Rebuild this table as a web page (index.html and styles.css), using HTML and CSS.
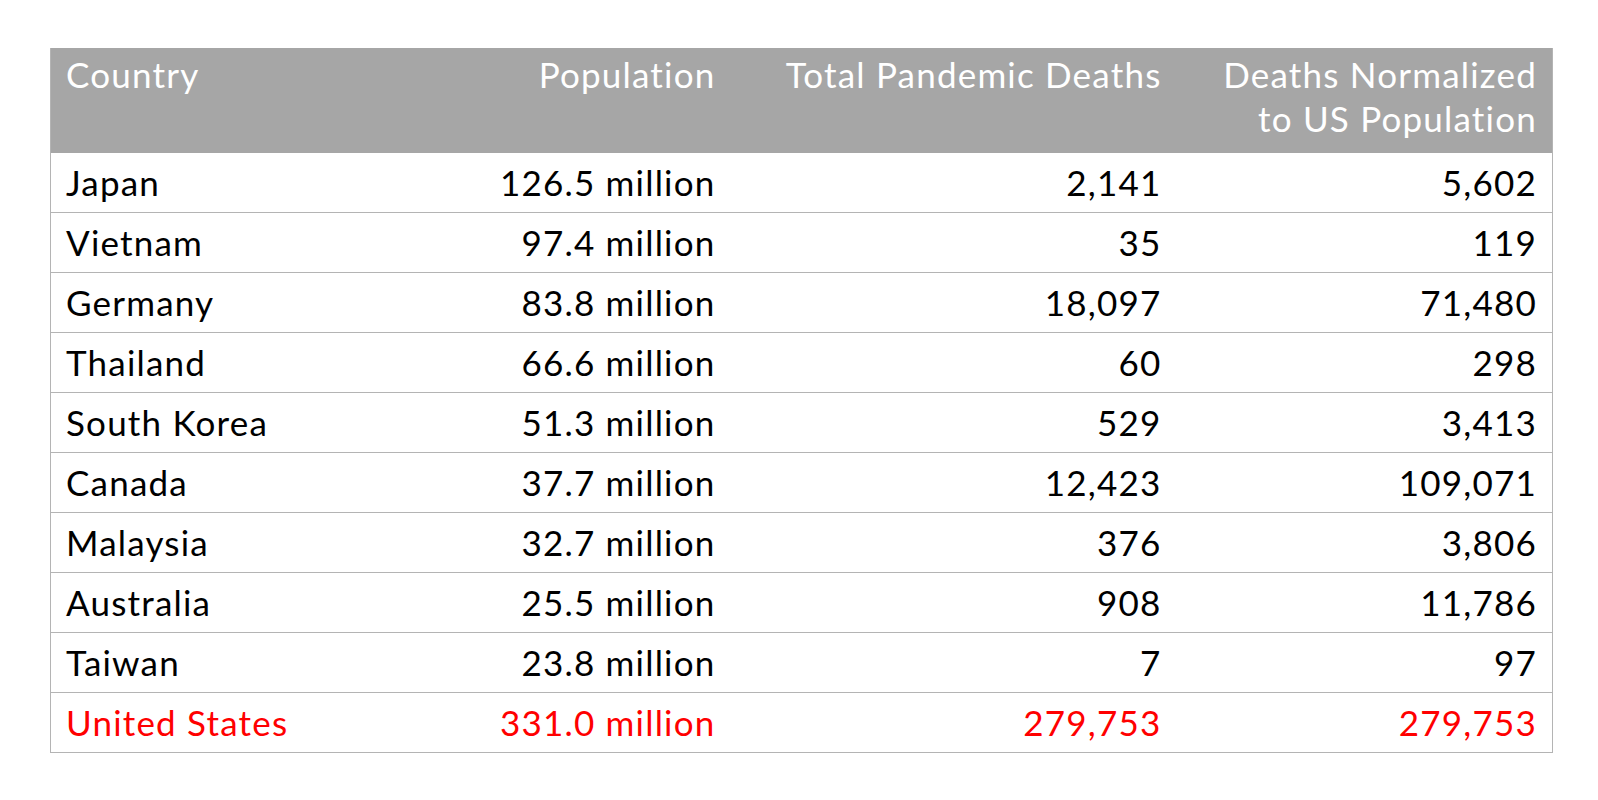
FILE: index.html
```html
<!DOCTYPE html>
<html>
<head>
<meta charset="utf-8">
<link rel="stylesheet" href="styles.css">
</head>
<body>
<table class="data">
  <colgroup>
    <col class="c1"><col class="c2"><col class="c3"><col class="c4">
  </colgroup>
  <thead>
    <tr>
      <th class="left">Country</th>
      <th>Population</th>
      <th>Total Pandemic Deaths</th>
      <th>Deaths Normalized<br>to US Population</th>
    </tr>
  </thead>
  <tbody>
    <tr><td class="left">Japan</td><td>126.5 million</td><td>2,141</td><td>5,602</td></tr>
    <tr><td class="left">Vietnam</td><td>97.4 million</td><td>35</td><td>119</td></tr>
    <tr><td class="left">Germany</td><td>83.8 million</td><td>18,097</td><td>71,480</td></tr>
    <tr><td class="left">Thailand</td><td>66.6 million</td><td>60</td><td>298</td></tr>
    <tr><td class="left">South Korea</td><td>51.3 million</td><td>529</td><td>3,413</td></tr>
    <tr><td class="left">Canada</td><td>37.7 million</td><td>12,423</td><td>109,071</td></tr>
    <tr><td class="left">Malaysia</td><td>32.7 million</td><td>376</td><td>3,806</td></tr>
    <tr><td class="left">Australia</td><td>25.5 million</td><td>908</td><td>11,786</td></tr>
    <tr><td class="left">Taiwan</td><td>23.8 million</td><td>7</td><td>97</td></tr>
    <tr class="us"><td class="left">United States</td><td>331.0 million</td><td>279,753</td><td>279,753</td></tr>
  </tbody>
</table>
</body>
</html>
```

FILE: styles.css
```css
html, body {
  margin: 0;
  padding: 0;
  background: #ffffff;
}

.data {
  margin: 48px 0 0 50px;
  border-collapse: collapse;
  table-layout: fixed;
  width: 1502px;
  font-family: Lato, "Noto Sans", sans-serif;
  font-size: 35px;
  letter-spacing: 1.2px;
  line-height: 44px;
  color: #000;
  border-left: 1px solid #b4b4b4;
  border-right: 1px solid #b4b4b4;
}

.c1 { width: 340px; }
.c2 { width: 340px; }
.c3 { width: 446px; }
.c4 { width: 376px; }

.data th {
  background: #a6a6a6;
  color: #ffffff;
  font-weight: 400;
  text-align: right;
  vertical-align: top;
  padding: 4px 15px 13px 15px;
  height: 88px;
}

.data td {
  text-align: right;
  padding: 7px 15px 8px 15px;
  height: 44px;
  border-bottom: 1px solid #b4b4b4;
  white-space: nowrap;
}

.data .left {
  text-align: left;
}

.data .us td {
  color: #ff0000;
}
```
